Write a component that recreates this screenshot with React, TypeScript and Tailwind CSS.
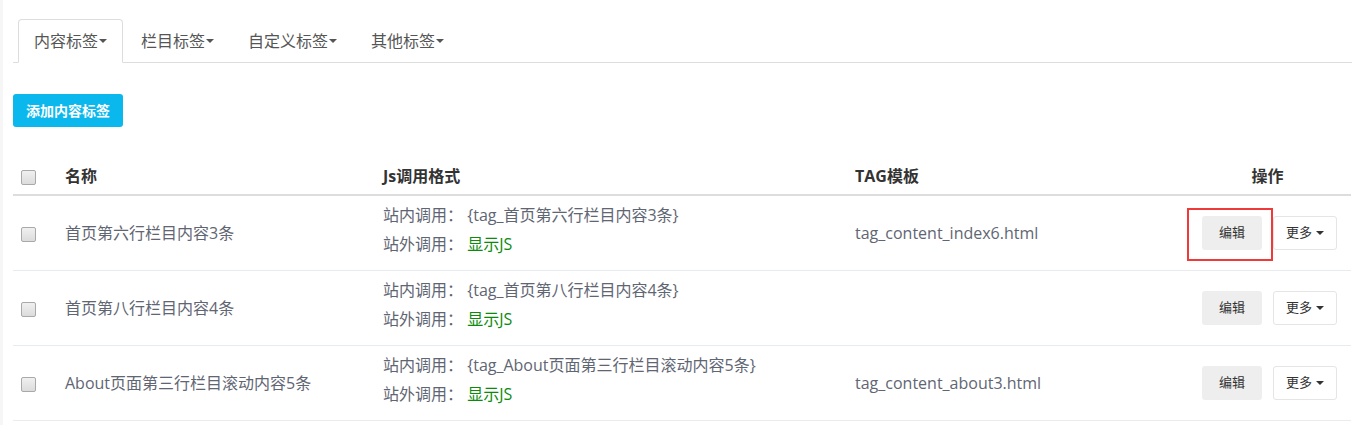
const font = { fontFamily: '"Open Sans", "Noto Sans CJK SC", sans-serif' };

type Row = {
    name: string;
    tag: string;
    template: string;
    highlight?: boolean;
};

const rows: Row[] = [
    { name: '首页第六行栏目内容3条', tag: '{tag_首页第六行栏目内容3条}', template: 'tag_content_index6.html', highlight: true },
    { name: '首页第八行栏目内容4条', tag: '{tag_首页第八行栏目内容4条}', template: '' },
    { name: 'About页面第三行栏目滚动内容5条', tag: '{tag_About页面第三行栏目滚动内容5条}', template: 'tag_content_about3.html' },
];

const tabs = ['内容标签', '栏目标签', '自定义标签', '其他标签'];

const Caret = () => (
    <span className="inline-block ml-[1px] align-middle w-0 h-0 border-t-[4px] border-t-current border-x-[4px] border-x-transparent"></span>
);

const Checkbox = () => (
    <span className="inline-block w-[15px] h-[15px] rounded-[2px] border border-[#a9a9a9] bg-gradient-to-b from-[#f0f0f0] to-[#dcdcdc] align-middle"></span>
);

export default function App() {
    return (
        <div className="w-[1352px] h-[425px] bg-white border-l-[3px] border-[#f6f6f6] pl-[10px] pt-[19px] overflow-hidden" style={font}>
            {/* Tabs */}
            <div className="flex border-b border-[#dddddd] pl-[5px]">
                {tabs.map((t, i) => (
                    <div
                        key={t}
                        className={
                            i === 0
                                ? 'mr-[2px] -mb-px px-[15px] h-[44px] flex items-center text-[16px] text-[#555] bg-white border border-[#dddddd] border-b-white rounded-t-[4px]'
                                : 'mr-[2px] px-[15px] h-[43px] flex items-center text-[16px] text-[#555] border border-transparent'
                        }
                    >
                        {t}
                        <Caret />
                    </div>
                ))}
            </div>

            {/* Add button */}
            <div className="mt-[31px]">
                <button className="h-[33px] w-[110px] rounded-[3px] bg-[#0bb8ee] text-white text-[14px] font-bold">
                    添加内容标签
                </button>
            </div>

            {/* Table */}
            <table className="mt-[26px] w-[1338px] table-fixed border-collapse text-[#5f6673]">
                <colgroup>
                    <col className="w-[39px]" />
                    <col className="w-[318px]" />
                    <col className="w-[472px]" />
                    <col className="w-[348px]" />
                    <col className="w-[161px]" />
                </colgroup>
                <thead>
                    <tr className="h-[42px] border-b-2 border-[#dddddd] text-[#333] text-[16px] font-bold text-left">
                        <th className="pl-[8px] pt-[4px]"><Checkbox /></th>
                        <th className="pl-[13px] pt-[4px]">名称</th>
                        <th className="pl-[13px] pt-[4px]">Js调用格式</th>
                        <th className="pl-[13px] pt-[4px]">TAG模板</th>
                        <th className="text-center pr-[6px] pt-[4px]">操作</th>
                    </tr>
                </thead>
                <tbody>
                    {rows.map((r) => (
                        <tr key={r.name} className="border-b border-[#e9ecef] text-[16px]">
                            <td className="pl-[8px] align-middle"><Checkbox /></td>
                            <td className="pl-[13px] align-middle">{r.name}</td>
                            <td className="pl-[13px] pt-[5px] pb-[11px] leading-[29px]">
                                <div>站内调用： {r.tag}</div>
                                <div>站外调用： <span className="text-[#0c8a0c]">显示JS</span></div>
                            </td>
                            <td className="pl-[13px] align-middle">{r.template}</td>
                            <td className="align-middle">
                                <div className="flex justify-center gap-[11px] relative pr-[2px]">
                                    <button className="w-[60px] h-[34px] rounded-[3px] bg-[#eeeeee] text-[13px] text-[#333]">编辑</button>
                                    <button className="w-[64px] h-[34px] rounded-[3px] bg-white border border-[#e5e5e5] text-[13px] text-[#333] flex items-center justify-center gap-[3px]">
                                        更多
                                        <Caret />
                                    </button>
                                    {r.highlight && (
                                        <div className="absolute left-[-3px] top-[-8px] w-[86px] h-[53px] border-2 border-[#f03a3a] pointer-events-none"></div>
                                    )}
                                </div>
                            </td>
                        </tr>
                    ))}
                </tbody>
            </table>
        </div>
    );
}
